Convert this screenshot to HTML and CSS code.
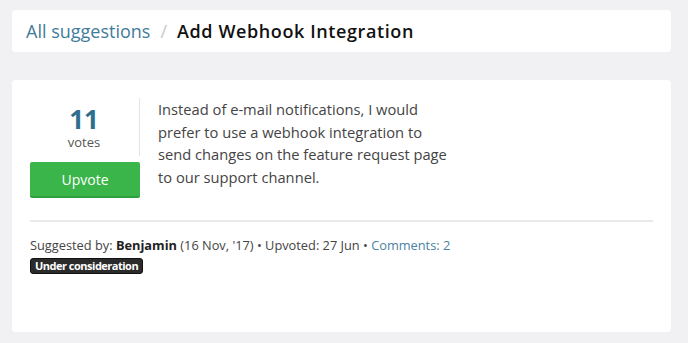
FILE: index.html
```html
<!DOCTYPE html>
<html lang="en">
<head>
    <meta charset="UTF-8">
    <meta name="viewport" content="width=device-width, initial-scale=1.0">
    <title>Add Webhook Integration</title>
    <link rel="stylesheet" href="styles.css">
</head>
<body>
    <div class="breadcrumb">
        <a href="#">All suggestions</a>
        <span class="sep">/</span>
        <span class="current">Add Webhook Integration</span>
    </div>

    <div class="suggestion">
        <div class="suggestion-body">
            <div class="vote-box">
                <div class="vote-count">
                    <div class="count">11</div>
                    <div class="label">votes</div>
                </div>
                <button type="button" class="upvote-btn">Upvote</button>
            </div>
            <p class="description">Instead of e-mail notifications, I would prefer to use a webhook integration to send changes on the feature request page to our support channel.</p>
        </div>
        <div class="meta">
            Suggested by: <strong>Benjamin</strong> (16 Nov, '17) &bull; Upvoted: 27 Jun &bull; <a href="#">Comments: 2</a>
        </div>
        <span class="status">Under consideration</span>
    </div>
</body>
</html>
```

FILE: styles.css
```css
body {
    font-family: "Open Sans", Arial, sans-serif;
    background-color: #f1f1f3;
    margin: 0;
    padding: 10px 17px 0 12px;
    color: #444;
}

a {
    color: #4a82a2;
    text-decoration: none;
}

.breadcrumb {
    background-color: #fff;
    border-radius: 4px;
    height: 42px;
    padding: 0 14px;
    display: flex;
    align-items: center;
    font-size: 18px;
}

.breadcrumb a {
    color: #3f7c9a;
}

.breadcrumb .sep {
    color: #c8c8c8;
    margin: 0 10px;
}

.breadcrumb .current {
    color: #111;
    font-weight: 600;
    letter-spacing: 0.6px;
}

.suggestion {
    background-color: #fff;
    border-radius: 4px;
    margin-top: 28px;
    padding: 18px 18px 0 18px;
    height: 234px;
}

.suggestion-body {
    display: flex;
    border-bottom: 2px solid #eaeaea;
    padding-bottom: 22px;
}

.vote-box {
    width: 110px;
    flex-shrink: 0;
}

.vote-count {
    border-right: 1px solid #e4e4e4;
    height: 58px;
    text-align: center;
    padding-right: 1px;
}

.vote-count .count {
    font-size: 26px;
    font-weight: 700;
    color: #2f6f8d;
    line-height: 30px;
    padding-top: 6px;
}

.vote-count .label {
    font-size: 13px;
    color: #555;
    line-height: 16px;
}

.upvote-btn {
    display: block;
    width: 110px;
    height: 36px;
    margin-top: 6px;
    background-color: #39b54a;
    border: none;
    border-bottom: 2px solid #2fa03f;
    border-radius: 2px;
    color: #fff;
    font-family: inherit;
    font-size: 14px;
    padding: 0;
}

.description {
    margin: 0 0 0 18px;
    font-size: 14.7px;
    line-height: 22.5px;
    color: #444;
    max-width: 300px;
}

.meta {
    font-size: 12.8px;
    margin-top: 13px;
    line-height: 20px;
    color: #444;
}

.meta strong {
    color: #222;
}

.status {
    display: table;
    margin-top: 3px;
    background-color: #2b2b2b;
    color: #fff;
    font-size: 11px;
    font-weight: 700;
    letter-spacing: -0.5px;
    line-height: 14px;
    padding: 0 4px;
    border-radius: 3px;
    border: 1px solid #111;
}
```
